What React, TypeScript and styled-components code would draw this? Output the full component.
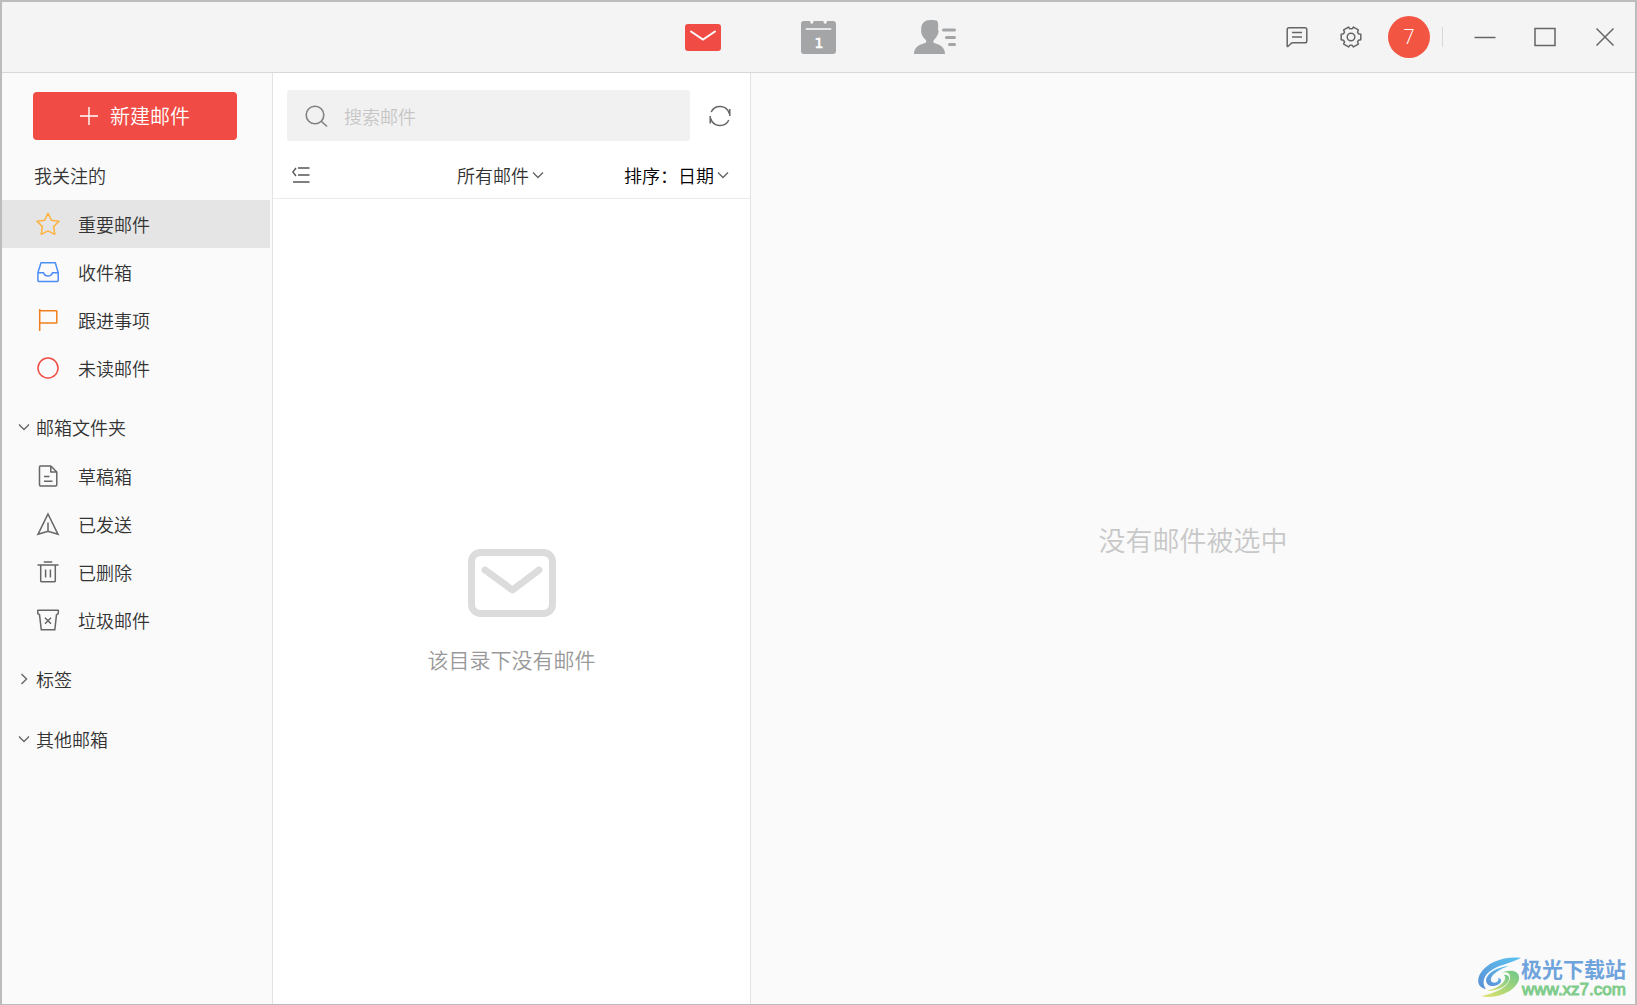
import React, { useState } from 'react';
import styled, { createGlobalStyle } from 'styled-components';

const GlobalStyle = createGlobalStyle`
  *, *::before, *::after { box-sizing: border-box; }
  body { margin: 0; }
  body, button, input, select {
    font-family: "Noto Sans CJK SC", sans-serif;
    font-weight: 350;
  }
  svg { display: block; flex: none; }
`;

const Window = styled.div`
  display: flex;
  flex-direction: column;
  min-height: 100vh;
  border: solid #bcbcbc;
  border-width: 2px 2px 1px 2px;
  background: #fafafa;
  color: #333;
  font-size: 18px;
  line-height: 24px;
`;

const Header = styled.header`
  display: grid;
  grid-template-columns: 1fr auto 1fr;
  align-items: stretch;
  height: 71px;
  background: #f4f4f4;
  border-bottom: 1px solid #d8d8d8;
`;

const Nav = styled.nav`
  grid-column: 2;
  display: flex;
`;

const IconButton = styled.button<{ $width: number }>`
  display: flex;
  align-items: center;
  justify-content: center;
  width: ${(p) => p.$width}px;
  padding: 0;
  border: 0;
  background: none;
  color: #666;
  cursor: pointer;
`;

const HeaderActions = styled.div`
  display: flex;
  justify-content: flex-end;
`;

const Avatar = styled.button`
  align-self: center;
  width: 42px;
  height: 42px;
  margin: 0 12px 0 10px;
  padding: 0;
  border: 0;
  border-radius: 50%;
  background: #f25643;
  color: #fff;
  font-family: "Open Sans", sans-serif;
  font-size: 20px;
  font-weight: 300;
  line-height: 24px;
`;

const Divider = styled.span`
  align-self: center;
  width: 1px;
  height: 20px;
  margin-right: 12px;
  background: #d8d8d8;
`;

const Columns = styled.div`
  flex: 1;
  display: grid;
  grid-template-columns: 271px 478px 1fr;
`;

const Sidebar = styled.aside`
  padding: 19px 2px 24px 0;
  border-right: 1px solid #e3e3e3;
`;

const Compose = styled.button`
  display: flex;
  align-items: center;
  justify-content: center;
  gap: 12px;
  width: 204px;
  height: 48px;
  margin-left: 31px;
  padding: 0;
  border: 0;
  border-radius: 4px;
  background: #f04b44;
  color: #fff;
  font-size: 20px;
  line-height: 24px;
`;

const Heading = styled.h2`
  height: 48px;
  margin: 12px 0 0;
  padding-left: 32px;
  font-size: 18px;
  font-weight: 350;
  line-height: 46px;
`;

const GroupToggle = styled.button`
  display: flex;
  align-items: center;
  gap: 6px;
  width: 100%;
  height: 48px;
  margin-top: 12px;
  padding: 0 0 2px 16px;
  border: 0;
  background: none;
  color: #333;
  font-size: 18px;
  line-height: 24px;
`;

const FolderList = styled.ul`
  margin: 0;
  padding: 0;
  list-style: none;
`;

const Folder = styled.button<{ $active: boolean }>`
  display: flex;
  align-items: center;
  gap: 18px;
  width: 100%;
  height: 48px;
  padding: 0 0 0 34px;
  border: 0;
  background: ${(p) => (p.$active ? '#e5e5e5' : 'transparent')};
  color: #333;
  font-size: 18px;
  line-height: 24px;
`;

const ListPane = styled.section`
  display: flex;
  flex-direction: column;
  background: #fff;
  border-right: 1px solid #e3e3e3;
`;

const SearchRow = styled.form`
  display: flex;
  padding: 17px 0 0 14px;
`;

const SearchBox = styled.label`
  flex: 1;
  display: flex;
  align-items: center;
  gap: 15px;
  height: 51px;
  padding: 0 16px;
  border-radius: 3px;
  background: #f1f1f1;
  color: #808080;
`;

const SearchInput = styled.input`
  flex: 1;
  min-width: 0;
  padding: 0;
  border: 0;
  outline: 0;
  background: transparent;
  color: #333;
  font-size: 18px;
  line-height: 24px;
  &::placeholder { color: #c6c6c6; opacity: 1; }
`;

const FilterRow = styled.div`
  display: flex;
  align-items: center;
  height: 58px;
  padding: 10px 21px 0 8px;
  border-bottom: 1px solid #ebebeb;
`;

const Picker = styled.label<{ $color: string; $end?: boolean }>`
  display: flex;
  align-items: center;
  margin-left: ${(p) => (p.$end ? 'auto' : '136px')};
  color: ${(p) => p.$color};
`;

const PickerSelect = styled.select<{ $chars: number }>`
  appearance: none;
  width: ${(p) => p.$chars}em;
  padding: 0;
  border: 0;
  background: none;
  color: inherit;
  font-size: 18px;
  line-height: 24px;
  margin-right: 3px;
`;

const EmptyState = styled.div`
  flex: 1;
  display: flex;
  flex-direction: column;
  align-items: center;
  justify-content: center;
  gap: 28px;
  padding-top: 18px;
  color: #999;
`;

const EmptyText = styled.p`
  margin: 0;
  font-size: 21px;
  line-height: 28px;
`;

const Reader = styled.main`
  display: flex;
  align-items: center;
  justify-content: center;
  padding-top: 2px;
  color: #c8c8c8;
  font-size: 27px;
  line-height: 36px;
`;

const Watermark = styled.div`
  position: absolute;
  right: 11px;
  bottom: 5px;
  display: flex;
  align-items: center;
`;

const WatermarkName = styled.div`
  color: #6ea3dc;
  font-size: 21px;
  font-weight: 700;
  line-height: 24px;
`;

const WatermarkUrl = styled.div`
  padding-left: 1px;
  color: #80cc8c;
  font-family: "Liberation Sans", Arial, sans-serif;
  font-size: 17px;
  font-weight: 400;
  line-height: 20px;
  -webkit-text-stroke: 1px #80cc8c;
`;

const Line = ({ size = 24, color = '#666', children }: { size?: number; color?: string; children: React.ReactNode }) => (
  <svg width={size} height={size} viewBox={`0 0 ${size} ${size}`} fill="none" stroke={color} strokeWidth="1.5" aria-hidden="true">
    {children}
  </svg>
);

const Chevron = ({ right = false }: { right?: boolean }) => (
  <svg width="12" height="12" viewBox="0 0 12 12" fill="none" stroke="#666" strokeWidth="1.4" aria-hidden="true">
    <path d={right ? 'M3.5 1 8.5 6 3.5 11' : 'M1 3.5 6 8.5 11 3.5'} />
  </svg>
);

const folders = {
  watched: [
    { name: '重要邮件', icon: <Line color="#ffb23f"><path strokeLinejoin="round" d="M12 1.4 15.3 8.2 23 9.3 17.6 14.6 18.8 22.3 12 18.9 5.2 22.3 6.4 14.6 1 9.3 8.7 8.2Z" /></Line> },
    { name: '收件箱', icon: <Line color="#4c8df6"><path strokeLinejoin="round" d="M5 2.7H19.3L22.2 12.7V20.6Q22.2 21.4 21.4 21.4H2.7Q1.9 21.4 1.9 20.6V12.7ZM1.9 12.7H7.6Q8.6 16 12 16T16.5 12.7H22.2" /></Line> },
    { name: '跟进事项', icon: <Line color="#f0801e"><path d="M3.7 1V23M3.7 2.7H20.2Q20.8 2.7 20.8 3.3V14.4Q20.8 15 20.2 15H3.7" /></Line> },
    { name: '未读邮件', icon: <Line color="#f04b44"><circle cx="12" cy="12" r="10" /></Line> },
  ],
  mailbox: [
    { name: '草稿箱', icon: <Line><path strokeLinejoin="round" d="M4.3 2H14.8L20.8 8V20.8Q20.8 22 19.6 22H4.6Q3.5 22 3.5 20.8V3.1Q3.5 2 4.3 2ZM14.8 2V8H20.8M8 12.5H13.5M8 17.2H16.5" /></Line> },
    { name: '已发送', icon: <Line><path strokeLinejoin="miter" d="M12 2 22 22.3 12 19.2 2 22.3ZM12 10.5V19" /></Line> },
    { name: '已删除', icon: <Line><path d="M1.5 5H22.5M7.8 2H16.2M4.7 5V20.7Q4.7 21.8 5.8 21.8H18.2Q19.3 21.8 19.3 20.7V5M9.6 9.5V17.5M14.4 9.5V17.5" /></Line> },
    { name: '垃圾邮件', icon: <Line><path strokeLinejoin="round" d="M1.8 2.3H22.3V5.6L20.5 6.6 18.8 21.8H5.3L3.5 6.6 1.8 5.6ZM9 9.7 15 15.7M15 9.7 9 15.7" /></Line> },
  ],
};

type Item = { name: string; icon: React.ReactNode };

const FolderGroup = ({ items, active, onPick }: { items: Item[]; active: string; onPick: (n: string) => void }) => (
  <FolderList>
    {items.map((f) => (
      <li key={f.name}>
        <Folder type="button" $active={f.name === active} onClick={() => onPick(f.name)}>
          {f.icon}
          {f.name}
        </Folder>
      </li>
    ))}
  </FolderList>
);

/* Six-lobed outline of the settings gear, computed around its centre. */
const gearPath = (() => {
  const pts: string[] = [];
  for (let i = 0; i < 6; i++) {
    const base = i * 60;
    [[-16, 10.2], [16, 10.2], [23, 8.2], [37, 8.2]].forEach(([a, r]) => {
      const t = ((base + a) * Math.PI) / 180;
      pts.push(`${(12 + r * Math.cos(t)).toFixed(2)} ${(12 + r * Math.sin(t)).toFixed(2)}`);
    });
  }
  return `M${pts.join('L')}Z`;
})();

export default function App() {
  const [active, setActive] = useState('重要邮件');
  const [open, setOpen] = useState(true);

  return (
    <Window>
      <GlobalStyle />
      <Header>
        <Nav aria-label="主导航">
          <IconButton $width={116} type="button" aria-label="邮件">
            <svg width="36" height="27" viewBox="0 0 36 27" fill="none">
              <rect width="36" height="27" rx="3" fill="#f04b44" />
              <path d="M6 7.5 18 15.5 30 7.5" stroke="#fff" strokeWidth="2" strokeLinecap="round" />
            </svg>
          </IconButton>
          <IconButton $width={116} type="button" aria-label="日历">
            <svg width="35" height="33" viewBox="0 0 35 33">
              <path fill="#a3a5a7" d="M3 0H9Q9.2 3 10.8 3T12.6 0H22.4Q22.6 3 24.2 3T26 0H32Q35 0 35 3V30Q35 33 32 33H3Q0 33 0 30V3Q0 0 3 0Z" />
              <path d="M5.5 8H29.5" stroke="#e6e6e6" strokeWidth="2" strokeLinecap="round" />
              <text x="18" y="27" textAnchor="middle" fill="#fff" stroke="#fff" strokeWidth=".6" fontFamily="DejaVu Sans, sans-serif" fontSize="14" fontWeight="400">1</text>
            </svg>
          </IconButton>
          <IconButton $width={116} type="button" aria-label="联系人">
            <svg width="42" height="34" viewBox="0 0 42 34" fill="#a3a5a7">
              <path d="M16 0C11 0 7.5 3 7.3 8L7.1 11C7.1 14 9 17.5 11.8 20C12.8 21.5 12.3 22.5 10.5 23.3C4 25 0 28 0 34H31C31 28 27 25 21 23.3C19 22.5 18.8 21.5 20 20C22.7 17 24.5 14 24.6 11.5L24 9L24.2 6C24.2 3 24 1.5 22.5 .6C20 0 18 0 16 0Z" />
              <path d="M29.5 10H40.5M32.5 17.5H40.5M35.5 24.5H40.5" stroke="#a3a5a7" strokeWidth="3" strokeLinecap="round" />
            </svg>
          </IconButton>
        </Nav>
        <HeaderActions>
          <IconButton $width={54} type="button" aria-label="反馈">
            <Line><path strokeLinejoin="round" d="M4 2.7H20Q21.8 2.7 21.8 4.5V16Q21.8 17.8 20 17.8H8Q6.5 17.8 5.5 19L2.8 21.5Q2.2 21.8 2.2 21V4.5Q2.2 2.7 4 2.7ZM7 7.5H17M7 12H17" /></Line>
          </IconButton>
          <IconButton $width={54} type="button" aria-label="设置">
            <Line><path strokeLinejoin="round" d={gearPath} /><circle cx="12" cy="12" r="3.8" /></Line>
          </IconButton>
          <Avatar type="button" aria-label="账户">7</Avatar>
          <Divider />
          <IconButton $width={60} type="button" aria-label="最小化">
            <Line><path d="M1.5 12.5H22.5" /></Line>
          </IconButton>
          <IconButton $width={60} type="button" aria-label="最大化">
            <Line><rect x="2" y="3.5" width="20" height="17" /></Line>
          </IconButton>
          <IconButton $width={60} type="button" aria-label="关闭">
            <Line><path d="M3.5 3.5 20.5 20.5M20.5 3.5 3.5 20.5" /></Line>
          </IconButton>
        </HeaderActions>
      </Header>

      <Columns>
        <Sidebar>
          <Compose type="button">
            <svg width="18" height="18" viewBox="0 0 18 18" stroke="#fff" strokeWidth="1.4" aria-hidden="true">
              <path d="M9 0V18M0 9H18" />
            </svg>
            新建邮件
          </Compose>
          <Heading>我关注的</Heading>
          <FolderGroup items={folders.watched} active={active} onPick={setActive} />
          <GroupToggle type="button" aria-expanded={open} onClick={() => setOpen(!open)}>
            <Chevron right={!open} />
            邮箱文件夹
          </GroupToggle>
          {open && <FolderGroup items={folders.mailbox} active={active} onPick={setActive} />}
          <GroupToggle type="button" aria-expanded="false">
            <Chevron right />
            标签
          </GroupToggle>
          <GroupToggle type="button" aria-expanded="true">
            <Chevron />
            其他邮箱
          </GroupToggle>
        </Sidebar>

        <ListPane>
          <SearchRow onSubmit={(e) => e.preventDefault()}>
            <SearchBox>
              <svg width="26" height="26" viewBox="0 0 26 26" fill="none" stroke="#808080" strokeWidth="1.6" aria-hidden="true">
                <circle cx="12" cy="12" r="8.8" />
                <path d="M18 18 24 23.5" />
              </svg>
              <SearchInput type="search" placeholder="搜索邮件" aria-label="搜索邮件" />
            </SearchBox>
            <IconButton $width={60} type="button" aria-label="刷新">
              <Line>
                <path d="M3.2 8A9.7 9.7 0 0 1 21.3 9.5M20.8 16A9.7 9.7 0 0 1 2.7 14.5M21.8 5V12M2.2 12V19.5" />
              </Line>
            </IconButton>
          </SearchRow>
          <FilterRow>
            <IconButton $width={40} type="button" aria-label="折叠列表">
              <svg width="18" height="16" viewBox="0 0 18 16" fill="none" stroke="#555" strokeWidth="1.4" aria-hidden="true">
                <path d="M6 1H17.5M6 8H17.5M1 15H17.5M4 1 .8 5 4 9" />
              </svg>
            </IconButton>
            <Picker $color="#333">
              <PickerSelect $chars={4} aria-label="筛选"><option>所有邮件</option></PickerSelect>
              <Chevron />
            </Picker>
            <Picker $color="#000" $end>
              排序：
              <PickerSelect $chars={2}><option>日期</option></PickerSelect>
              <Chevron />
            </Picker>
          </FilterRow>
          <EmptyState>
            <svg width="88" height="68" viewBox="0 0 88 68" fill="none" stroke="#dcdcdc" strokeWidth="7" aria-hidden="true">
              <rect x="3.5" y="3.5" width="81" height="61" rx="9" />
              <path d="M17 21 44.5 41 71 21" strokeLinecap="round" strokeLinejoin="round" />
            </svg>
            <EmptyText>该目录下没有邮件</EmptyText>
          </EmptyState>
        </ListPane>

        <Reader>没有邮件被选中</Reader>
      </Columns>

      <Watermark>
        <svg width="43" height="42" viewBox="0 0 43 42" aria-hidden="true">
          <defs>
            <linearGradient id="swirlBlue" x1="1" y1="0" x2="0" y2="1">
              <stop offset="0" stopColor="#5cc3f0" />
              <stop offset="1" stopColor="#5b8fd6" />
            </linearGradient>
            <linearGradient id="swirlGreen" x1="0" y1="1" x2="1" y2="0">
              <stop offset="0" stopColor="#e3e36c" />
              <stop offset="1" stopColor="#6cc78a" />
            </linearGradient>
          </defs>
          <path fill="url(#swirlBlue)" d="M43 1C27 -1 9 5 2 17C-2 25 1 31 8 32C4 27 5 20 11 15C19 8 31 7 43 1Z" />
          <path fill="url(#swirlBlue)" d="M31 9C19 10 9 16 8 23C8 29 15 31 21 27C24 25 24 21 20 21C22 24 17 27 14 25C10 21 18 13 31 9Z" />
          <path fill="url(#swirlGreen)" d="M21 17C27 14 32 15 32 20C32 29 19 36 3 39C20 43 39 33 41 22C42 12 30 12 21 17Z" />
          <path fill="url(#swirlGreen)" d="M26 18C30 22 24 30 9 34C22 34 32 27 31 20Q29 17 26 18Z" />
        </svg>
        <div>
          <WatermarkName>极光下载站</WatermarkName>
          <WatermarkUrl>www.xz7.com</WatermarkUrl>
        </div>
      </Watermark>
    </Window>
  );
}
